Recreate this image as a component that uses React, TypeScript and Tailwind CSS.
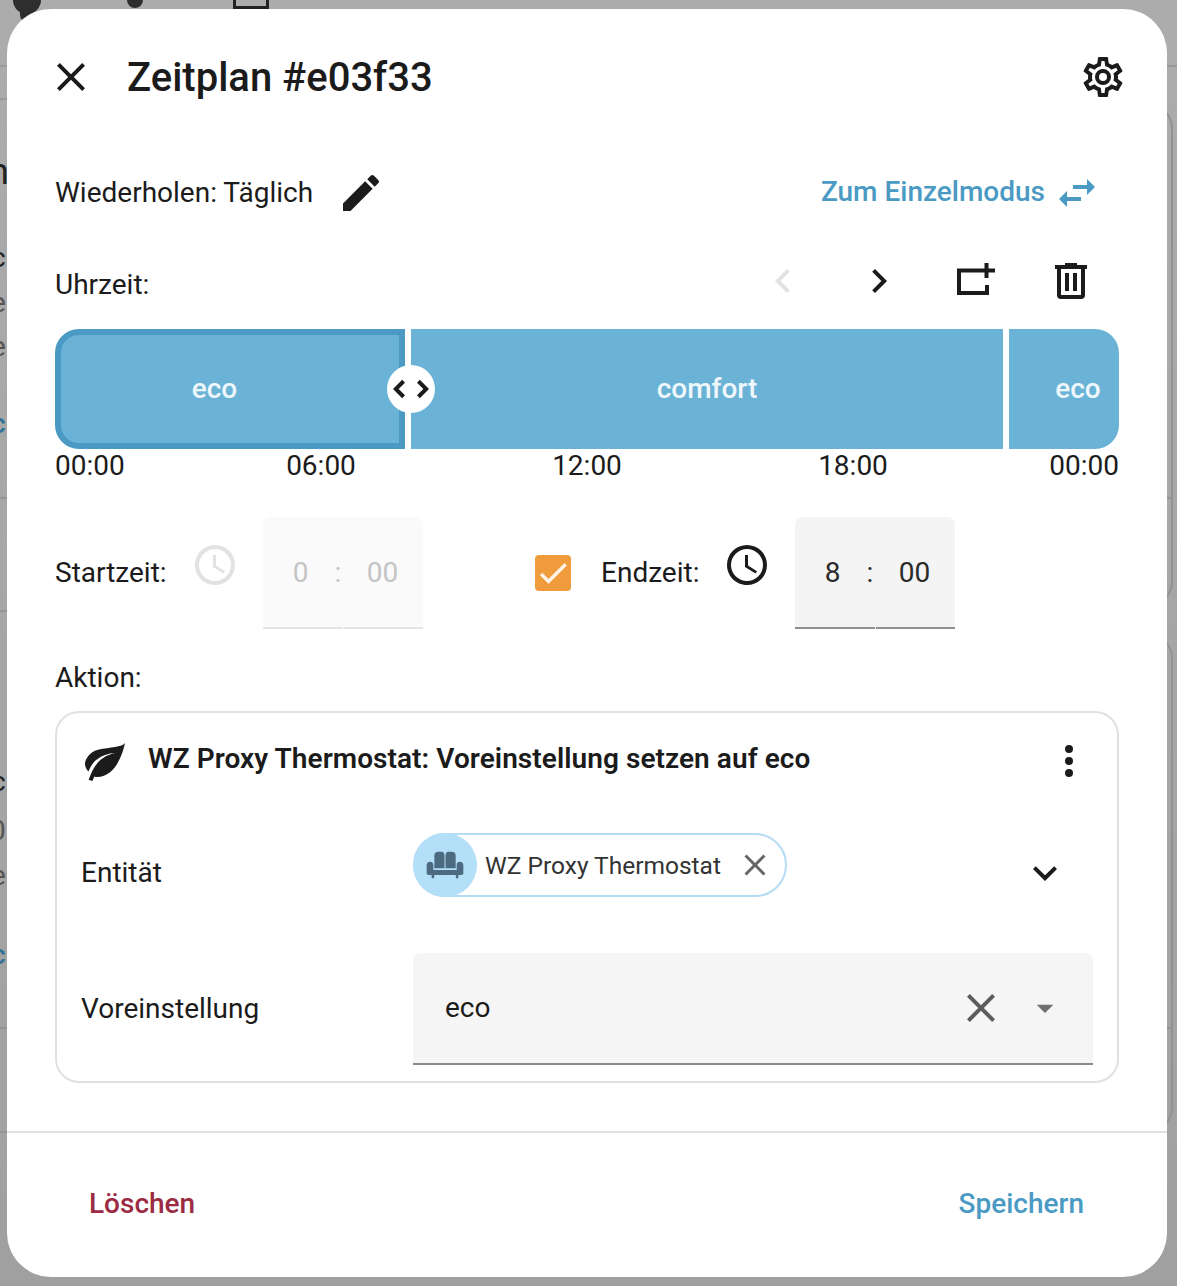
import React from "react";

const P = {
  close: "M19,6.41L17.59,5L12,10.59L6.41,5L5,6.41L10.59,12L5,17.59L6.41,19L12,13.41L17.59,19L19,17.59L13.41,12L19,6.41Z",
  cog: "M12,8A4,4 0 0,1 16,12A4,4 0 0,1 12,16A4,4 0 0,1 8,12A4,4 0 0,1 12,8M12,10A2,2 0 0,0 10,12A2,2 0 0,0 12,14A2,2 0 0,0 14,12A2,2 0 0,0 12,10M10,22C9.75,22 9.54,21.82 9.5,21.58L9.13,18.93C8.5,18.68 7.96,18.34 7.44,17.94L4.95,18.95C4.73,19.03 4.46,18.95 4.34,18.73L2.34,15.27C2.21,15.05 2.27,14.78 2.46,14.63L4.57,12.97L4.5,12L4.57,11L2.46,9.37C2.27,9.22 2.21,8.95 2.34,8.73L4.34,5.27C4.46,5.05 4.73,4.96 4.95,5.05L7.44,6.05C7.96,5.66 8.5,5.32 9.13,5.07L9.5,2.42C9.54,2.18 9.75,2 10,2H14C14.25,2 14.46,2.18 14.5,2.42L14.87,5.07C15.5,5.32 16.04,5.66 16.56,6.05L19.05,5.05C19.27,4.96 19.54,5.05 19.66,5.27L21.66,8.73C21.79,8.95 21.73,9.22 21.54,9.37L19.43,11L19.5,12L19.43,13L21.54,14.63C21.73,14.78 21.79,15.05 21.66,15.27L19.66,18.73C19.54,18.95 19.27,19.04 19.05,18.95L16.56,17.95C16.04,18.34 15.5,18.68 14.87,18.93L14.5,21.58C14.46,21.82 14.25,22 14,22H10M11.25,4L10.88,6.61C9.68,6.86 8.62,7.5 7.85,8.39L5.44,7.35L4.69,8.65L6.8,10.2C6.4,11.37 6.4,12.64 6.8,13.8L4.68,15.36L5.43,16.66L7.86,15.62C8.63,16.5 9.68,17.14 10.87,17.38L11.24,20H12.76L13.13,17.39C14.32,17.14 15.37,16.5 16.14,15.62L18.57,16.66L19.32,15.36L17.2,13.81C17.6,12.64 17.6,11.37 17.2,10.2L19.31,8.65L18.56,7.35L16.15,8.39C15.38,7.5 14.32,6.86 13.12,6.62L12.75,4H11.25Z",
  pencil: "M20.71,7.04C21.1,6.65 21.1,6 20.71,5.63L18.37,3.29C18,2.9 17.35,2.9 16.96,3.29L15.12,5.12L18.87,8.87M3,17.25V21H6.75L17.81,9.93L14.06,6.18L3,17.25Z",
  swap: "M21,9L17,5V8H10V10H17V13M7,11L3,15L7,19V16H14V14H7V11Z",
  left: "M15.41,16.58L10.83,12L15.41,7.41L14,6L8,12L14,18L15.41,16.58Z",
  right: "M8.59,16.58L13.17,12L8.59,7.41L10,6L16,12L10,18L8.59,16.58Z",
  add: "M3,5.75H16.75V3H18.75V5.75H22V7.75H18.75V10.5H16.75V7.75H5V17H17V14H19V19H3V5.75Z",
  trash: "M9,3V4H4V6H5V19A2,2 0 0,0 7,21H17A2,2 0 0,0 19,19V6H20V4H15V3H9M7,6H17V19H7V6M9,8V17H11V8H9M13,8V17H15V8H13Z",
  handle: "M18.17,12L15,8.83L16.41,7.41L21,12L16.41,16.58L15,15.17L18.17,12M5.83,12L9,15.17L7.59,16.59L3,12L7.59,7.42L9,8.83L5.83,12Z",
  clock: "M12,20A8,8 0 0,0 20,12A8,8 0 0,0 12,4A8,8 0 0,0 4,12A8,8 0 0,0 12,20M12,2A10,10 0 0,1 22,12A10,10 0 0,1 12,22C6.47,22 2,17.5 2,12A10,10 0 0,1 12,2M12.5,7V12.25L17,15.08L16.25,16.31L11,13V7H12.5Z",
  leaf: "M17,8C8,10 5.9,16.17 3.82,21.34L5.71,22L6.66,19.7C7.14,19.87 7.64,20 8,20C19,20 22,3 22,3C21,5 14,5.25 9,6.25C4,7.25 2,11.5 2,13.5C2,15.5 3.75,17.25 3.75,17.25C7,8 17,8 17,8Z",
  dots: "M12,16A2,2 0 0,1 14,18A2,2 0 0,1 12,20A2,2 0 0,1 10,18A2,2 0 0,1 12,16M12,10A2,2 0 0,1 14,12A2,2 0 0,1 12,14A2,2 0 0,1 10,12A2,2 0 0,1 12,10M12,4A2,2 0 0,1 14,6A2,2 0 0,1 12,8A2,2 0 0,1 10,6A2,2 0 0,1 12,4Z",
  sofa: "M8,4H10A1.7,2.4 0 0,1 11.7,6.4V14H5.6V6.4A2.4,2.4 0 0,1 8,4M14,4H16A2.4,2.4 0 0,1 18.4,6.4V14H12.3V6.4A1.7,2.4 0 0,1 14,4M1,17V12A2.2,2.2 0 0,1 3,10A2,2 0 0,1 5,12V15H19V12A2,2 0 0,1 21,10A2.2,2.2 0 0,1 23,12V17A1,1 0 0,1 22,18H20V20H18.5V18H5.5V20H4V18H2A1,1 0 0,1 1,17Z",
  down: "M7.41,8.58L12,13.17L16.59,8.58L18,10L12,16L6,10L7.41,8.58Z",
  menu: "M7,10L12,15L17,10H7Z",
  check: "M21,7L9,19L3.5,13.5L4.91,12.09L9,16.17L19.59,5.59L21,7Z",
};

function Icon({ d, className }: { d: string; className: string }) {
  return (
    <svg viewBox="0 0 24 24" className={className} fill="currentColor">
      <path d={d} />
    </svg>
  );
}

function Segment({ label, className }: { label: string; className: string }) {
  return (
    <div className={`flex items-center justify-center bg-[#6bb3d6] text-[28px] font-medium text-[#eef7fb] ${className}`}>
      {label}
    </div>
  );
}

function TimeBox({ hour, disabled }: { hour: string; disabled?: boolean }) {
  const text = disabled ? "text-[#c4c4c4]" : "text-[#2a2a2a]";
  const line = disabled ? "bg-[#e4e4e4]" : "bg-[#8f8f8f]";
  return (
    <div className={`flex h-[112px] w-[160px] flex-col rounded-t-lg ${disabled ? "bg-[#fafafa]" : "bg-[#f4f4f4]"}`}>
      <div className={`flex flex-1 items-center pt-[2px] text-[28px] ${text}`}>
        <span className="w-[75px] text-center">{hour}</span>
        <span className="-ml-[4px] w-[8px] text-center">:</span>
        <span className="flex-1 text-center">00</span>
      </div>
      <div className="flex h-[2px] gap-px">
        <div className={`flex-1 ${line}`} />
        <div className={`flex-1 ${line}`} />
      </div>
    </div>
  );
}

function Backdrop() {
  return (
    <div className="absolute inset-0 overflow-hidden font-['Roboto',sans-serif] text-[#2b2b2b]">
      <div className="absolute left-[13px] top-[-14px] h-[28px] w-[28px] rounded-full bg-[#2e2e2e]" />
      <div className="absolute left-[20px] top-[4px] h-[18px] w-[14px] rounded-b-full bg-[#2e2e2e]" />
      <div className="absolute left-[127px] top-[-8px] h-[16px] w-[16px] rounded-full bg-[#2e2e2e]" />
      <div className="absolute left-[233px] top-[-20px] h-[29px] w-[36px] border-[3px] border-[#222]" />
      <div className="absolute left-0 top-[65px] h-[2px] w-full bg-[#999]" />
      <div className="absolute left-0 top-[98px] h-[2px] w-[8px] bg-[#999]" />
      <div className="absolute left-0 top-[497px] h-[2px] w-[8px] bg-[#959595]" />
      <div className="absolute left-0 top-[610px] h-[2px] w-[8px] bg-[#959595]" />
      <div className="absolute left-0 top-[1027px] h-[2px] w-[8px] bg-[#959595]" />
      <div className="absolute left-0 top-[1131px] h-[2px] w-[8px] bg-[#959595]" />
      <span className="absolute left-[-11px] top-[150px] text-[36px] leading-[44px] text-[#222]">n</span>
      <span className="absolute left-[-9px] top-[242px] text-[28px] leading-[32px] text-[#222]">c</span>
      <span className="absolute left-[-9px] top-[287px] text-[28px] leading-[32px] text-[#555]">e</span>
      <span className="absolute left-[-9px] top-[331px] text-[28px] leading-[32px] text-[#555]">e</span>
      <span className="absolute left-[-9px] top-[408px] text-[28px] leading-[32px] font-medium text-[#2f7198]">c</span>
      <span className="absolute left-[-9px] top-[766px] text-[28px] leading-[32px] text-[#222]">c</span>
      <span className="absolute left-[-10px] top-[815px] text-[28px] leading-[32px] text-[#555]">0</span>
      <span className="absolute left-[-9px] top-[860px] text-[28px] leading-[32px] text-[#555]">e</span>
      <span className="absolute left-[-9px] top-[939px] text-[28px] leading-[32px] font-medium text-[#2f7198]">c</span>
      <div className="absolute left-[1100px] top-[104px] h-[502px] w-[73px] rounded-[24px] border-2 border-[#929292]" />
      <div className="absolute left-[1100px] top-[634px] h-[498px] w-[73px] rounded-[24px] border-2 border-[#929292]" />
      <div className="absolute left-[1160px] top-[497px] h-[2px] w-[12px] bg-[#929292]" />
      <div className="absolute left-[1160px] top-[1027px] h-[2px] w-[12px] bg-[#929292]" />
    </div>
  );
}

export default function App() {
  return (
    <div className="relative h-[1286px] w-[1177px] overflow-hidden bg-linear-to-b from-[#acacac] to-[#a0a0a0] pl-[7px] pt-[9px] font-['Roboto',sans-serif] text-[28px] text-[#1b1b1b]">
      <Backdrop />
      <div className="relative flex h-[1268px] w-[1160px] flex-col overflow-hidden rounded-[44px] bg-white">
        <header className="flex h-[136px] shrink-0 items-center justify-between px-[40px]">
          <div className="flex items-center">
            <Icon d={P.close} className="h-12 w-12" />
            <h1 className="ml-[32px] pt-[2px] text-[40px] font-medium leading-none">Zeitplan #e03f33</h1>
          </div>
          <Icon d={P.cog} className="h-12 w-12" />
        </header>

        <div className="flex flex-col px-[48px]">
          <div className="flex h-[96px] items-center justify-between">
            <div className="flex items-center">
              <span>Wiederholen: Täglich</span>
              <Icon d={P.pencil} className="ml-[24px] h-12 w-12" />
            </div>
            <div className="flex items-center pr-[18px] text-[#4a9ac4]">
              <span className="mb-[2px] font-medium">Zum Einzelmodus</span>
              <Icon d={P.swap} className="ml-[8px] h-12 w-12" />
            </div>
          </div>

          <div className="flex h-[88px] items-center justify-between">
            <span>Uhrzeit:</span>
            <div className="mb-[8px] flex">
              <div className="flex w-[96px] justify-center text-[#e2e2e2]"><Icon d={P.left} className="h-12 w-12" /></div>
              <div className="flex w-[96px] justify-center"><Icon d={P.right} className="h-12 w-12" /></div>
              <div className="flex w-[96px] justify-center"><Icon d={P.add} className="h-12 w-12" /></div>
              <div className="flex w-[96px] justify-center"><Icon d={P.trash} className="h-12 w-12" /></div>
            </div>
          </div>

          <div className="relative flex h-[120px] gap-[6px]">
            <Segment label="eco" className="w-[350px] rounded-l-[24px] border-[6px] border-[#4a9ac4] pr-[31px]" />
            <Segment label="comfort" className="w-[592px]" />
            <Segment label="eco" className="w-[110px] rounded-r-[24px] pl-[28px]" />
            <div className="absolute left-[332px] top-[36px] flex h-12 w-12 items-center justify-center rounded-full bg-white">
              <Icon d={P.handle} className="h-12 w-12" />
            </div>
          </div>

          <div className="flex h-[34px] items-center text-[28px]">
            <span className="w-[133px]">00:00</span>
            <span className="w-[266px] text-center">06:00</span>
            <span className="w-[266px] text-center">12:00</span>
            <span className="w-[266px] text-center">18:00</span>
            <span className="w-[133px] text-right">00:00</span>
          </div>

          <div className="mt-[34px] flex h-[112px] items-center">
            <span className="w-[136px]">Startzeit:</span>
            <Icon d={P.clock} className="mb-[16px] h-12 w-12 text-[#e2e2e2]" />
            <div className="ml-[24px]"><TimeBox hour="0" disabled /></div>
            <div className="ml-[112px] flex h-[36px] w-[36px] items-center justify-center rounded-[4px] bg-[#f09c3c] text-[#fdf3e6]">
              <Icon d={P.check} className="h-[36px] w-[36px] stroke-current stroke-[0.5]" />
            </div>
            <span className="ml-[30px] w-[122px]">Endzeit:</span>
            <Icon d={P.clock} className="mb-[16px] h-12 w-12" />
            <div className="ml-[24px]"><TimeBox hour="8" /></div>
          </div>

          <div className="flex h-[82px] items-end pb-[17px] leading-[32px]">Aktion:</div>

          <div className="rounded-[24px] border-2 border-[#e0e0e0] px-[24px] pb-[16px]">
            <div className="flex h-[96px] items-center justify-between">
              <div className="flex items-center">
                <Icon d={P.leaf} className="h-12 w-12" />
                <span className="mb-[4px] ml-[19px] font-semibold tracking-[0.06px]">WZ Proxy Thermostat: Voreinstellung setzen auf eco</span>
              </div>
              <Icon d={P.dots} className="h-12 w-12" />
            </div>

            <div className="flex h-[128px] items-center">
              <span className="w-[332px]">Entität</span>
              <div className="mb-[16px] flex h-[64px] w-[374px] items-center rounded-full border-2 border-[#b5dcf5] bg-white">
                <div className="-ml-[2px] flex h-[64px] w-[64px] items-center justify-center rounded-full bg-[#b3dff8] text-[#4d6b80]">
                  <Icon d={P.sofa} className="h-10 w-10" />
                </div>
                <span className="ml-[8px] pt-[2px] text-[24.5px] text-[#333]">WZ Proxy Thermostat</span>
                <Icon d={P.close} className="ml-[16px] h-9 w-9 text-[#666]" />
              </div>
              <Icon d={P.down} className="ml-auto mr-[24px] h-12 w-12" />
            </div>

            <div className="mt-[16px] flex items-center">
              <span className="w-[332px]">Voreinstellung</span>
              <div className="flex h-[112px] w-[680px] items-center rounded-t-lg border-b-2 border-[#8a8a8a] bg-[#f5f5f5] pl-[32px]">
                <span>eco</span>
                <Icon d={P.close} className="ml-auto h-12 w-12 text-[#5c5c5c]" />
                <Icon d={P.menu} className="ml-[20px] mr-[28px] h-10 w-10 text-[#707070]" />
              </div>
            </div>
          </div>
        </div>

        <div className="mt-[48px] flex flex-1 items-center justify-between border-t-2 border-[#e0e0e0] pb-[2px] pl-[82px] pr-[83px] font-medium">
          <span className="text-[#9b2a43]">Löschen</span>
          <span className="text-[#4a9ac4]">Speichern</span>
        </div>
      </div>
    </div>
  );
}
